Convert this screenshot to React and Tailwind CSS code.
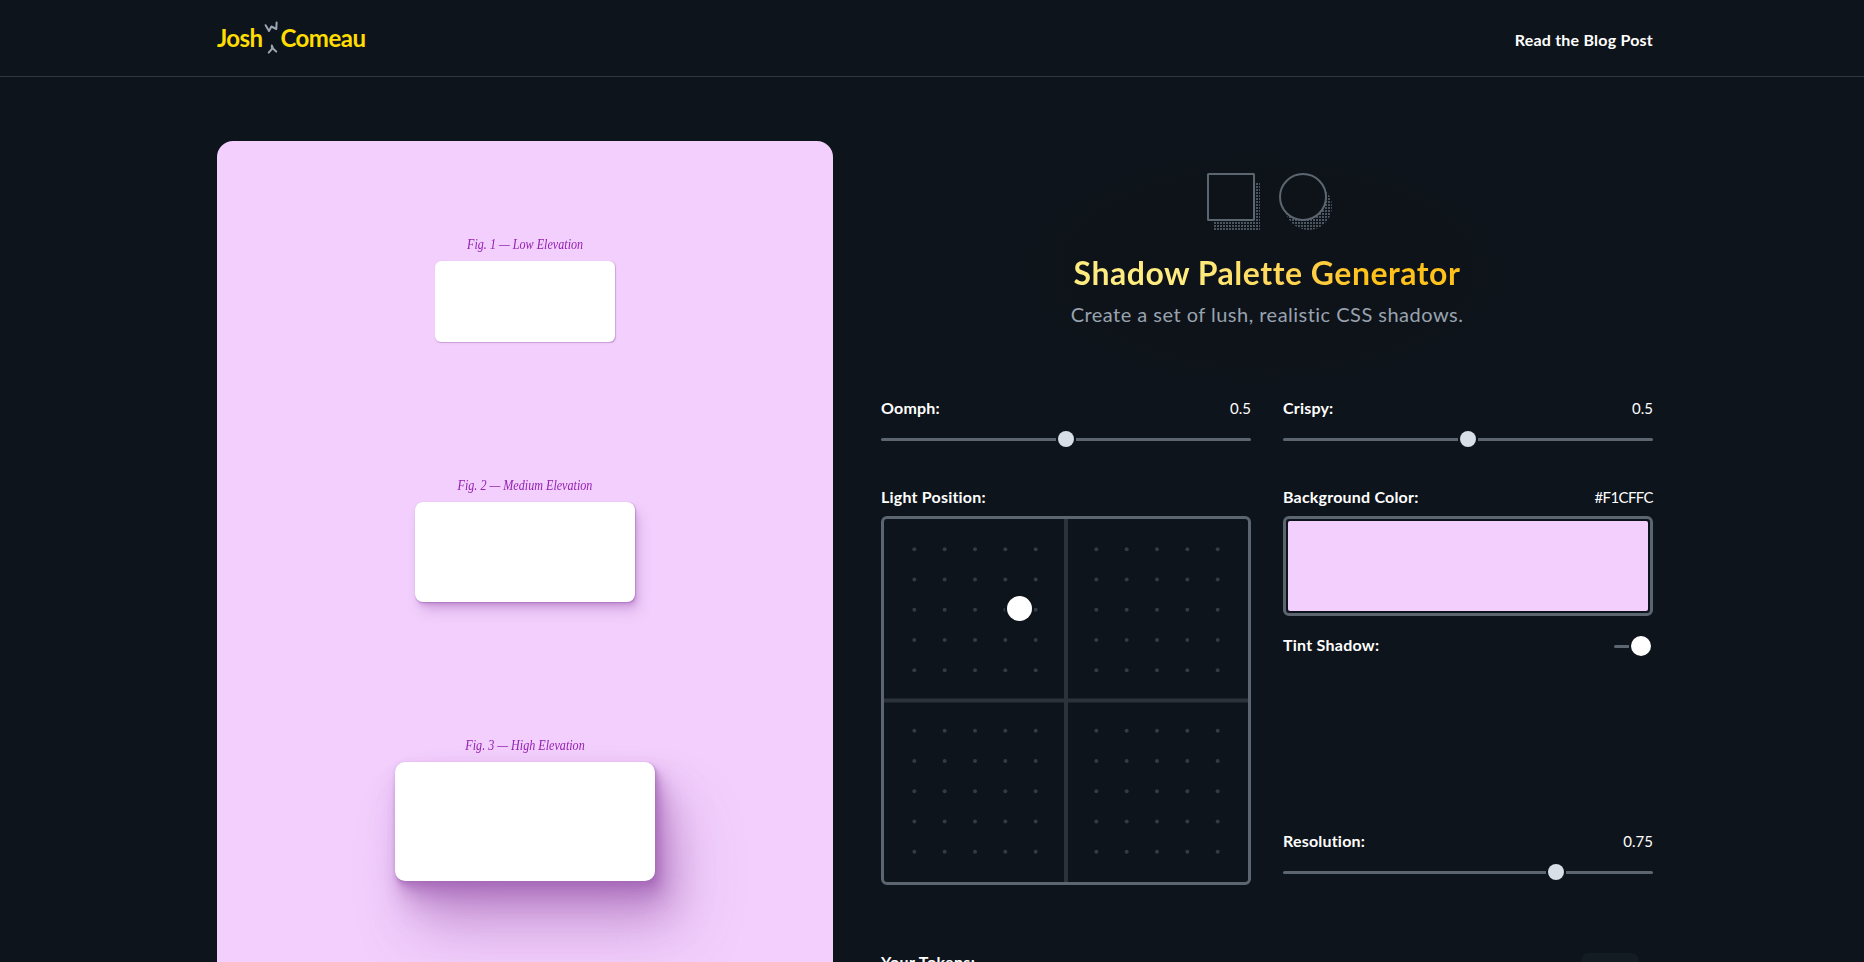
import React from "react";

const DISPLAY = "font-['Lato','Open_Sans',sans-serif]";

function Logo() {
  return (
    <a className="flex items-start text-[24px] leading-[29px] font-bold text-[#ffdd00]">
      <span className="pt-[4px] tracking-[-0.6px]">Josh</span>
      <svg className="mr-px ml-[2px] h-[37px] w-[15px]" viewBox="0 0 15 37" fill="none" stroke="#9ba6b2" strokeWidth="2" strokeLinecap="round" strokeLinejoin="round">
        <path d="M1.6 6.2 L5 12 L7.4 7.5 L12.3 10 L12.6 3.6" />
        <path d="M4.7 33.6 L8 29.8 L7.8 26.4 L9.2 29.8 L12.2 32.6" />
      </svg>
      <span className="pt-[4px] tracking-[-0.5px]">Comeau</span>
    </a>
  );
}

function Shapes() {
  return (
    <svg className="ml-2 h-[60px] w-[128px]" viewBox="0 0 128 60" fill="none">
      <defs>
        <pattern id="dots" width="3" height="3" patternUnits="userSpaceOnUse" x="7" y="10">
          <rect width="2" height="2" fill="#4b555f" />
        </pattern>
      </defs>
      <path d="M49 10H53V57H7V49H49Z" fill="url(#dots)" />
      <circle cx="101.5" cy="33.5" r="23.5" fill="url(#dots)" />
      <circle cx="96" cy="24" r="23" fill="#0e131a" stroke="#5c6670" strokeWidth="2" />
      <rect x="1" y="1" width="46" height="46" rx="0.5" stroke="#5c6670" strokeWidth="2" />
    </svg>
  );
}

function Field({ label, value, valueClass = "", children, className = "" }) {
  return (
    <div className={className}>
      <div className="flex justify-between text-[16px] leading-6 text-white">
        <span className="font-bold tracking-[0.2px]">{label}</span>
        <span className={"text-[15px] " + valueClass}>{value}</span>
      </div>
      {children}
    </div>
  );
}

function Slider({ value }) {
  return (
    <div className="mt-[9px] flex h-5 items-center">
      <div className="h-[3px] rounded-l-full bg-[#5c6670]" style={{ width: value * 350 }} />
      <div className="mx-[2px] size-4 rounded-full bg-[#d8dfe7]" />
      <div className="h-[3px] flex-1 rounded-r-full bg-[#5c6670]" />
    </div>
  );
}

const STEPS = [1, 2, 3, 4, 5, 7, 8, 9, 10, 11];

function LightPad() {
  return (
    <div className="relative h-[369px] w-[370px] rounded-[6px] border-[3px] border-[#5c6670]">
      <svg className="h-[363px] w-[364px]" viewBox="0 0 364 363">
        <path d="M182 0V363M0 181.5H364" stroke="#2a323a" strokeWidth="4" />
        {STEPS.map((row) =>
          STEPS.map((col) => (
            <circle key={row + "-" + col} cx={(col * 364) / 12} cy={(row * 363) / 12} r="2" fill="#333b44" />
          ))
        )}
      </svg>
      <div className="absolute top-[77px] left-[123px] size-[25px] rounded-full bg-white ring-2 ring-[#0e141b]" />
    </div>
  );
}

function Figure({ caption, className, box }) {
  return (
    <figure className={"flex flex-col items-center " + className}>
      <figcaption className="scale-x-[0.865] font-['Liberation_Serif',serif] text-[14px] leading-5 text-[#9321b1] italic">{caption}</figcaption>
      <div className={"bg-white " + box} />
    </figure>
  );
}

export default function App() {
  return (
    <div className={"h-[962px] w-full overflow-hidden bg-[#0e141b] " + DISPLAY}>
      <header className="flex h-[77px] justify-between border-b border-[#2f373f] pr-[211px] pl-[217px]">
        <div className="pt-[19px]">
          <Logo />
        </div>
        <a className="pt-[28px] text-[16px] leading-6 font-bold tracking-[0.22px] text-white">Read the Blog Post</a>
      </header>

      <main className="flex gap-12 pt-16 pl-[217px]">
        <section className="h-[900px] w-[616px] shrink-0 rounded-[16px] bg-[#f2cffc] pt-[94px]">
          <Figure
            caption="Fig. 1 — Low Elevation"
            className="h-[241px]"
            box="mt-[6px] h-[81px] w-[180px] rounded-[6px] shadow-[0.3px_0.5px_0.7px_hsl(286_36%_56%/0.36),0.4px_0.8px_1px_-1.2px_hsl(286_36%_56%/0.36),1px_2px_2.5px_-2.5px_hsl(286_36%_56%/0.36)]"
          />
          <Figure
            caption="Fig. 2 — Medium Elevation"
            className="h-[260px]"
            box="mt-[6px] h-[100px] w-[220px] rounded-[8px] shadow-[0.3px_0.5px_0.7px_hsl(286_36%_56%/0.36),0.8px_1.6px_2px_-0.8px_hsl(286_36%_56%/0.36),2.1px_4.1px_5.2px_-1.7px_hsl(286_36%_56%/0.36),5px_10px_12.6px_-2.5px_hsl(286_36%_56%/0.36)]"
          />
          <Figure
            caption="Fig. 3 — High Elevation"
            className=""
            box="mt-[6px] h-[119px] w-[260px] rounded-[10px] shadow-[0.3px_0.5px_0.7px_hsl(286_36%_56%/0.34),1.5px_2.9px_3.7px_-0.4px_hsl(286_36%_56%/0.34),2.7px_5.4px_6.8px_-0.7px_hsl(286_36%_56%/0.34),4.5px_8.9px_11.2px_-1.1px_hsl(286_36%_56%/0.34),7.1px_14.3px_18px_-1.4px_hsl(286_36%_56%/0.34),11.2px_22.3px_28.1px_-1.8px_hsl(286_36%_56%/0.34),17px_33.9px_42.7px_-2.1px_hsl(286_36%_56%/0.34),25px_50px_62.9px_-2.5px_hsl(286_36%_56%/0.34)]"
          />
        </section>

        <section className="w-[772px] shrink-0">
          <div className="flex h-[255px] flex-col items-center bg-[radial-gradient(ellipse_260px_125px_at_center,#0e1219_40%,transparent_100%)] pt-8">
            <Shapes />
            <h1 className="mt-[20px] bg-linear-to-r from-[#ffec80] from-30% to-[#ffc21a] to-75% bg-clip-text text-[32px] leading-[40px] font-bold tracking-[0.5px] text-transparent">
              Shadow Palette Generator
            </h1>
            <p className="mt-[7px] text-[20px] leading-[28px] tracking-[0.48px] text-[#98a3af]">Create a set of lush, realistic CSS shadows.</p>
          </div>

          <div className="grid grid-cols-2 gap-x-8">
            <Field label="Oomph:" value="0.5" className="h-[89px]">
              <Slider value={0.5} />
            </Field>
            <Field label="Crispy:" value="0.5" className="h-[89px]">
              <Slider value={0.5} />
            </Field>
            <Field label="Light Position:">
              <div className="mt-[7px]">
                <LightPad />
              </div>
            </Field>
            <div className="flex flex-col">
              <Field label="Background Color:" value="#F1CFFC" valueClass="tracking-[-0.6px]">
                <div className="mt-[7px] h-[100px] rounded-[6px] border-[3px] border-[#5c6670] p-[2px]">
                  <div className="h-full rounded-[2px] bg-[#f2cffc]" />
                </div>
              </Field>
              <div className="mt-[17px] flex items-center justify-between text-[16px] leading-6 font-bold text-white">
                <span className="tracking-[0.25px]">Tint Shadow:</span>
                <div className="flex items-center gap-[2px] pt-[2px] pr-[2px]">
                  <div className="h-[3px] w-[15px] rounded-l-full bg-[#5c6670]" />
                  <div className="size-5 rounded-full bg-white" />
                </div>
              </div>
              <Field label="Resolution:" value="0.75" className="mt-[172px]">
                <Slider value={0.75} />
              </Field>
            </div>
          </div>

          <div className="mt-[65px] flex justify-between pr-[14px] text-[16px] leading-6 font-bold tracking-[0.4px] text-white">
            <span>Your Tokens:</span>
            <div className="mt-[3px] h-10 w-[58px] rounded-[8px] bg-[#131c23]" />
          </div>
        </section>
      </main>
    </div>
  );
}
